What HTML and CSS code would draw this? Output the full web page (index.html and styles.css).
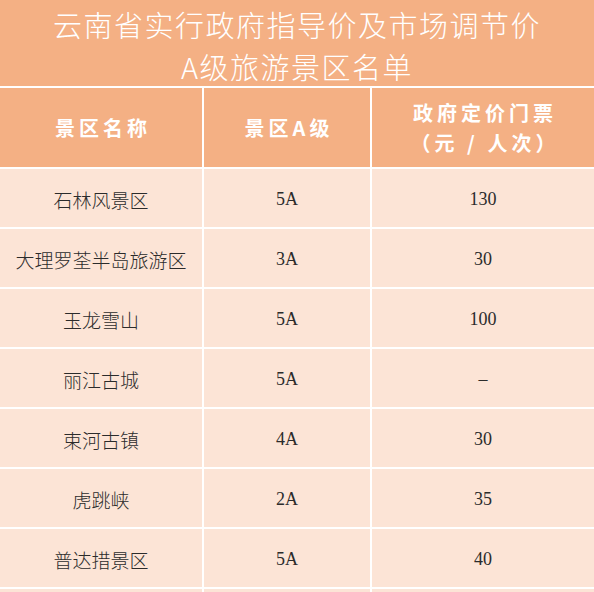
FILE: index.html
```html
<!DOCTYPE html>
<html lang="zh-CN">
<head>
<meta charset="utf-8">
<title>云南省A级旅游景区名单</title>
<link rel="stylesheet" href="styles.css">
</head>
<body>
<div class="sheet">
  <div class="title">
    <div class="title-line">云南省实行政府指导价及市场调节价</div>
    <div class="title-line">A级旅游景区名单</div>
  </div>
  <div class="table">
    <div class="cell head">景区名称</div>
    <div class="cell head">景区A级</div>
    <div class="cell head head-two"><span>政府定价门票</span><span>（元 / 人次）</span></div>

    <div class="cell">石林风景区</div>
    <div class="cell num">5A</div>
    <div class="cell num">130</div>

    <div class="cell">大理罗荃半岛旅游区</div>
    <div class="cell num">3A</div>
    <div class="cell num">30</div>

    <div class="cell">玉龙雪山</div>
    <div class="cell num">5A</div>
    <div class="cell num">100</div>

    <div class="cell">丽江古城</div>
    <div class="cell num">5A</div>
    <div class="cell num">–</div>

    <div class="cell">束河古镇</div>
    <div class="cell num">4A</div>
    <div class="cell num">30</div>

    <div class="cell">虎跳峡</div>
    <div class="cell num">2A</div>
    <div class="cell num">35</div>

    <div class="cell">普达措景区</div>
    <div class="cell num">5A</div>
    <div class="cell num">40</div>

    <div class="cell"></div>
    <div class="cell"></div>
    <div class="cell"></div>
  </div>
</div>
</body>
</html>
```

FILE: styles.css
```css
html, body {
  margin: 0;
  padding: 0;
  background: #ffffff;
}

.sheet {
  width: 594px;
  display: flex;
  flex-direction: column;
  gap: 2px;
  font-family: "Noto Sans CJK SC", sans-serif;
}

.title {
  height: 86px;
  background: #F4B084;
  color: #ffffff;
  display: flex;
  flex-direction: column;
  align-items: center;
  justify-content: center;
  font-size: 29px;
  font-weight: 300;
  line-height: 42px;
  letter-spacing: 1.5px;
  box-sizing: border-box;
  padding-top: 3px;
}

.title-line {
  white-space: nowrap;
}

.table {
  display: grid;
  grid-template-columns: 202px 166px 1fr;
  grid-template-rows: 79px;
  grid-auto-rows: 58px;
  gap: 2px;
  background: #ffffff;
}

.cell {
  background: #FCE4D6;
  color: #2b2b2b;
  display: flex;
  align-items: center;
  justify-content: center;
  font-size: 19px;
  font-weight: 300;
  white-space: nowrap;
  padding-top: 2px;
}

.num {
  font-family: "Liberation Serif", "Noto Sans CJK SC", serif;
  font-size: 18px;
  font-weight: 400;
}

.head {
  background: #F4B084;
  color: #ffffff;
  font-size: 20px;
  font-weight: 700;
  letter-spacing: 4px;
  text-indent: 4px;
  padding-top: 0;
}

.head-two {
  flex-direction: column;
  line-height: 30px;
}
```
